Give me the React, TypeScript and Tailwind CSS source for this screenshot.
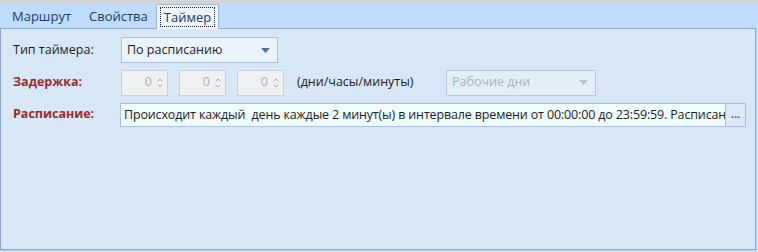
import { ChevronUp, ChevronDown } from "lucide-react";

const font = { fontFamily: '"Open Sans", "Noto Sans", sans-serif' };

function Arrow({ disabled }: { disabled?: boolean }) {
  return (
    <svg width="9" height="5" viewBox="0 0 9 5" className="shrink-0">
      <path d="M0 0 H9 L4.5 5 Z" fill={disabled ? "#b9c3cf" : "#4f6d9a"} />
    </svg>
  );
}

function Spinner() {
  return (
    <div className="w-[47px] h-[26px] border border-[#c5d1e0] bg-[#eef0f2] flex items-center justify-end pr-[3px] gap-[4px]">
      <span className="text-[#b0b0b0]">0</span>
      <div className="flex flex-col text-[#a8a8a8] -space-y-[2px]">
        <ChevronUp size={8} strokeWidth={3} />
        <ChevronDown size={8} strokeWidth={3} />
      </div>
    </div>
  );
}

export default function App() {
  return (
    <div
      className="w-[758px] h-[252px] bg-[#d4d4d4] pt-[3px] text-[12.5px] text-[#1e1e1e] overflow-hidden"
      style={font}
    >
      <div className="h-[249px] bg-[#bfdbff] flex flex-col">
        {/* ===== TABS ===== */}
        <div className="flex items-end h-[25px] pl-[4px]">
          <div className="px-[8px] h-[22px] flex items-center text-[13px] text-[#1f3a63]">Маршрут</div>
          <div className="px-[8px] h-[22px] flex items-center text-[13px] text-[#1f3a63] ml-[2px]">Свойства</div>
          <div className="h-[25px] px-[3px] pt-[2px] bg-[#eef5fc] border border-b-0 border-[#9fb5d6] rounded-t-[2px] -mb-px relative z-10">
            <span className="px-[3px] border border-dotted border-[#222] text-[13px] text-[#1f3a63] leading-[18px] block">
              Таймер
            </span>
          </div>
        </div>

        {/* ===== PANEL ===== */}
        <div className="flex-1 mr-[2px] border border-[#8fa7cc] bg-[#d7e7f5] pl-[12px] pt-[8px] flex flex-col gap-[6px]">
          <div className="flex items-center h-[26px]">
            <span className="w-[108px]">Тип таймера:</span>
            <div className="w-[157px] h-[26px] border border-[#a9bfdf] bg-[#eaf2fb] flex items-center justify-between pl-[5px] pr-[7px]">
              <span>По расписанию</span>
              <Arrow />
            </div>
          </div>

          <div className="flex items-center h-[27px]">
            <span className="w-[108px] font-bold text-[#9c2b2b]">Задержка:</span>
            <div className="flex gap-[11px]">
              <Spinner />
              <Spinner />
              <Spinner />
            </div>
            <span className="ml-[13px] w-[149px]">(дни/часы/минуты)</span>
            <div className="w-[150px] h-[26px] border border-[#b7c8df] bg-[#e3edf7] flex items-center justify-between pl-[5px] pr-[7px]">
              <span className="text-[#a9b3bf]">Рабочие дни</span>
              <Arrow disabled />
            </div>
          </div>

          <div className="flex items-center h-[25px]">
            <span className="w-[107px] font-bold text-[#9c2b2b]">Расписание:</span>
            <div className="w-[606px] h-[24px] border border-[#a9bfdf] bg-[#f0fcff] pl-[3px] overflow-hidden">
              <div className="whitespace-pre leading-[22px] tracking-[-0.15px]">
                Происходит каждый  день каждые 2 минут(ы) в интервале времени от 00:00:00 до 23:59:59. Расписание
              </div>
            </div>
            <div className="w-[20px] h-[24px] border border-l-0 border-[#a9bfdf] bg-[#dde9f6] flex items-center justify-center text-[#3d5c8a] font-bold text-[11px] leading-none pb-[3px]">
              ...
            </div>
          </div>
        </div>
        <div className="h-[2px] bg-[#c3d8f0]" />
      </div>
    </div>
  );
}
